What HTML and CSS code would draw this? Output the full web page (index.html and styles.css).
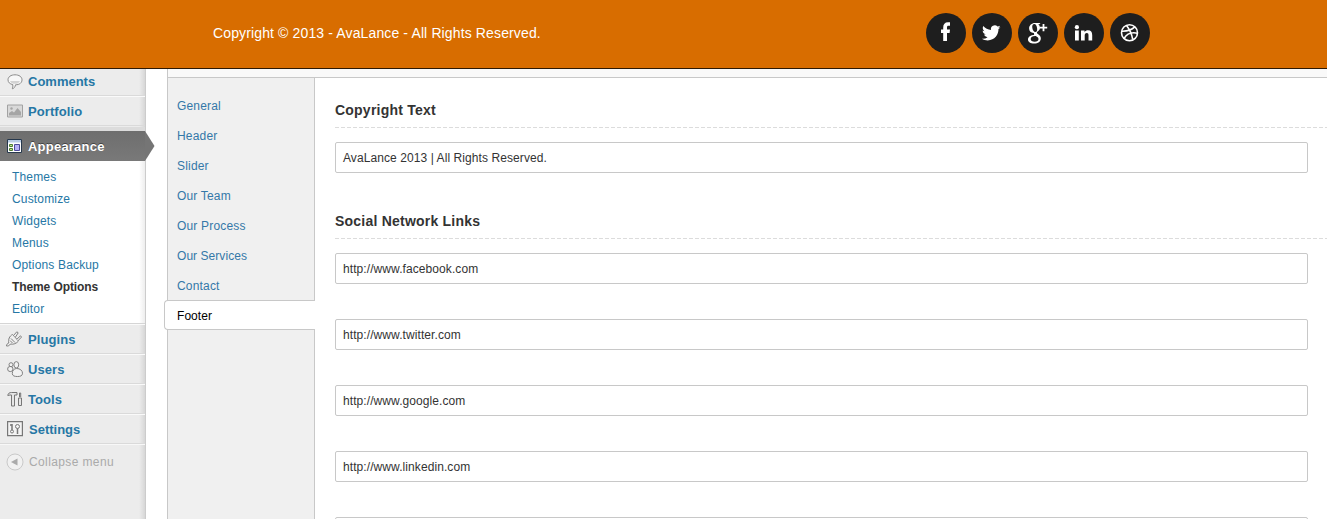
FILE: index.html
```html
<!DOCTYPE html>
<html lang="en">
<head>
<meta charset="utf-8">
<title>Theme Options</title>
<link rel="stylesheet" href="styles.css">
</head>
<body>
<header class="banner">
  <p class="copyright">Copyright © 2013 - AvaLance - All Rights Reserved.</p>
  <div class="social">
    <a class="circle"><svg viewBox="0 0 40 40"><path fill="#fff" d="M17.200 28V20H15V16.500h2.200v-1.800c0-3.600 1.700-5.500 4.800-5.500h2v3.600h-1.400c-1.300 0-1.600.5-1.600 1.700v2H24l-.4 3.500H21V28z"/></svg></a>
    <a class="circle"><svg viewBox="0 0 40 40"><path fill="#fff" d="M28.500 14.800c-.7.3-1.300.5-2 .6.800-.5 1.300-1.200 1.500-2-.7.400-1.500.7-2.300.8a3.600 3.600 0 0 0-6.200 3.300c-3-.1-5.700-1.600-7.500-3.800-1 1.700-.5 3.800 1.100 4.900-.6 0-1.200-.2-1.700-.5 0 1.800 1.200 3.300 3 3.700-.5.100-1.100.2-1.700.1.500 1.400 1.800 2.400 3.400 2.500a7.300 7.300 0 0 1-5.400 1.500c1.600 1 3.500 1.600 5.600 1.600 6.700 0 10.500-5.600 10.300-10.900.8-.5 1.400-1.100 1.900-1.800z" transform="translate(-1.200 -1.200) scale(1.040)"/></svg></a>
    <a class="circle"><svg viewBox="0 0 40 40" fill="#fff"><path fill-rule="evenodd" d="M22.500 10l-1.200 1.200h-1.100c1.200.9 1.800 2 1.800 3.500 0 1.500-.8 2.600-2 3.500-.9.800-1.100 1-1.100 1.500s.5.900 1.300 1.500c1.900 1.300 2.600 2.400 2.600 4.300 0 3-2.700 5-6.700 5-3.700 0-6.100-1.500-6.100-4 0-2.600 2.500-4.300 6.500-4.400-.6-.7-.8-1.400-.4-2.200-3 .2-5-1.700-5-4.400 0-3.100 2.500-5.500 6-5.500zM16.300 11c-1.500.1-2.300 1.500-2 3.700.3 2.500 1.600 4.200 3.100 4.200 1.400-.1 2-1.500 1.700-3.700-.3-2.500-1.400-4.300-2.800-4.200zM17.200 23c-2.700 0-4.500 1.200-4.500 3 0 1.700 1.500 2.700 4 2.700 2.400 0 3.800-1 3.800-2.700 0-1.300-1.200-2.100-2.700-3z"/><path d="M24.600 11h1.800v2.700h2.800v1.700h-2.800v2.800h-1.800v-2.800h-2.700v-1.700h2.700z"/></svg></a>
    <a class="circle"><svg viewBox="0 0 40 40" fill="#fff"><circle cx="12.900" cy="14.200" r="2.100"/><path d="M11 18h3.800v10H11zM17 18h3.500v1.500c1-1.300 2-1.800 3.500-1.800 3 0 4.200 1.900 4.200 4.800V28h-3.700v-5.100c0-1.500-.4-2.300-1.700-2.300-1.500 0-2.100 1-2.100 2.400v5H17z" transform="translate(0 -.5)"/></svg></a>
    <a class="circle"><svg viewBox="0 0 40 40" fill="none" stroke="#fff" stroke-width="1.600"><circle cx="19.500" cy="19.700" r="8"/><path d="M16.500 12.400c3 3.700 5.300 8.300 6.200 14M11.600 18.200c5.300.2 9.800-1 13.200-4.300M14 25.700c2.500-4.500 7.200-6.800 13.400-5.500"/></svg></a>
  </div>
</header>
<div class="layout">
  <aside class="menu">
    <a class="item comments"><svg class="icon" viewBox="0 0 16 16" fill="#f8f8f8" stroke="#8b8b8b"><path d="M8 .8c4 0 7 2 7 5 0 3-2.500 5-6.500 5-.2 2-1.500 3.700-3.200 4 .6-1 .7-2.500.5-4.200C2.800 10 1 8.300 1 5.800c0-3 3-5 7-5z"/><path stroke="none" fill="#d3d3d3" d="M3 7h10c-.8 2-3 2.800-5 2.800S3.600 9 3 7z"/></svg><span>Comments</span></a>
    <a class="item portfolio"><svg class="icon" viewBox="0 0 16 16"><path fill="#d9d9d9" stroke="#a2a2a2" d="M.5 2h15v12H.5z"/><path fill="#a5a5a5" d="M2 12.500V10l3-2 2 1.500L10.500 5 14 9v3.500z"/><circle cx="4.500" cy="5.500" r="1.200" fill="#a5a5a5"/></svg><span>Portfolio</span></a>
    <a class="item current"><svg class="icon" viewBox="0 0 16 16"><path fill="#fff" stroke="#26384d" d="M.5 1.500h14v13H.5z"/><path fill="#b8cce4" d="M1 2h13v2.500H1z"/><path fill="#b9e08c" stroke="#4d7c32" d="M2.500 6.500h3v2h-3zM2.500 10.500h3v2h-3z"/><path fill="#b5b0f5" stroke="#4c4a9a" d="M7.500 6.500h5v6h-5z"/></svg><span>Appearance</span><svg class="arrow" viewBox="0 0 10 30"><path fill="#757575" d="M0 0l9.500 15L0 30z"/></svg></a>
    <div class="submenu">
      <a>Themes</a><a>Customize</a><a>Widgets</a><a>Menus</a><a>Options Backup</a><a class="selected">Theme Options</a><a>Editor</a>
    </div>
    <a class="item plugins"><svg class="icon" viewBox="0 0 16 16" fill="#f0f0f0" stroke="#808080"><path d="M.5 15c0-1.500.8-2.500 2.300-3C2 8.500 3.500 5 6.500 3.500l6 6.500c-2 2.500-5 3.700-8 3C3.500 14.500 2.300 15.200.5 15z"/><path d="M7.500 4.500L10.800.8l1.400 1L9.500 6M10.800 8.300l3.700-3.500 1 1.300-3.500 3.700M5 7.500l4 4M4 9.500l2.500 2.500"/></svg><span>Plugins</span></a>
    <a class="item users"><svg class="icon" viewBox="0 0 16 16" fill="#f2f2f2" stroke="#808080"><ellipse cx="3.300" cy="8" rx="2.700" ry="2.600"/><circle cx="4" cy="3.700" r="2"/><ellipse cx="9.300" cy="3.800" rx="2.400" ry="3.200"/><path d="M5.300 12.500C5.300 9.500 7 7.500 9.700 7.500c3.300 0 5.800 2 5.800 4.700s-2.200 3.300-5 3.300-5.200-.5-5.200-3z"/></svg><span>Users</span></a>
    <a class="item tools"><svg class="icon" viewBox="0 0 16 16" fill="#e6e6e6" stroke="#777"><path d="M.8 4.500C1 2.300 2.500 1.500 4.500 1.500H10v2.500H7.500v11h-3V4H3zM12.500 6V2h1.200v4M11.500 7h3v7.500h-3z"/></svg><span>Tools</span></a>
    <a class="item settings"><svg class="icon" viewBox="0 0 16 16" fill="none" stroke="#777"><path fill="#f3f3f3" stroke-width="1.200" d="M.6.600h14.800v14H.6z"/><path stroke-width="1.500" d="M5 3v6M10.500 7.500V13M3 4h2"/><circle cx="5" cy="10.500" r="1.500"/><circle cx="10.500" cy="5.500" r="2"/></svg><span>Settings</span></a>
    <a class="collapse"><svg class="round" viewBox="0 0 18 18"><circle cx="9" cy="9" r="8" fill="#f1f1f1" stroke="#c9c9c9"/><path fill="#aaa" d="M5 9l6.500-3.600v7.200z"/></svg><span>Collapse menu</span></a>
  </aside>
  <main class="panel">
    <div class="strip"></div>
    <div class="columns">
      <nav class="tabs">
        <a>General</a><a>Header</a><a>Slider</a><a>Our Team</a><a>Our Process</a><a class="tight">Our Services</a><a>Contact</a><a class="active">Footer</a>
      </nav>
      <section class="content">
        <h2>Copyright Text</h2>
        <div class="field">AvaLance 2013 | All Rights Reserved.</div>
        <h2 class="h-social">Social Network Links</h2>
        <div class="field">http://www.facebook.com</div>
        <div class="field">http://www.twitter.com</div>
        <div class="field">http://www.google.com</div>
        <div class="field">http://www.linkedin.com</div>
        <div class="field"></div>
      </section>
    </div>
  </main>
</div>
</body>
</html>
```
FILE: styles.css
```css
* { box-sizing: border-box; }
body { margin: 0; height: 519px; overflow: hidden; background: #fff; font: 12px/22px "Liberation Sans", Arial, sans-serif; color: #333; }
.banner { height: 69px; display: flex; justify-content: space-between; padding: 13px 177px 0 213px; background: #d86d00; border-bottom: 1px solid #2e1a04; }
.copyright { margin: 0; font-size: 14px; line-height: 40px; color: #fff; letter-spacing: .13px; }
.social { display: flex; gap: 6px; }
.circle { width: 40px; height: 40px; border-radius: 50%; background: #1e1e1e; }
.circle svg { display: block; width: 40px; height: 40px; }

.layout { display: flex; height: 450px; overflow: hidden; }
.menu { width: 146px; flex: none; background: linear-gradient(to right, transparent 139px, rgba(0,0,0,.09) 145px), #ececec; border-right: 1px solid #ccc; color: #2677a5; }
.item { display: flex; align-items: center; height: 30px; padding-left: 7px; gap: 5px; border-top: 1px solid #fafafa; border-bottom: 1px solid #dadada; font-size: 13px; font-weight: bold; letter-spacing: .08px; }
.item span { padding-top: 1px; }
.icon { width: 16px; height: 16px; flex: none; }
.comments { height: 27px; border-top: 0; padding-bottom: 1px; letter-spacing: 0; }
.comments span { padding-top: 0; }
.portfolio { margin-bottom: 5px; }
.plugins .icon { margin-left: -1px; margin-right: 1px; }
.settings { gap: 6px; letter-spacing: 0; }
.current { position: relative; height: 30px; border: 0; background: linear-gradient(#6e6e6e, #797979); box-shadow: 0 -4px 0 #dcdcdc; color: #fff; letter-spacing: .22px; text-shadow: 0 -1px 0 #444; }
.arrow { position: absolute; left: 145px; top: 0; width: 10px; height: 30px; }
.submenu { display: flex; flex-direction: column; height: 163px; padding: 5px 0 0 12px; background: linear-gradient(to right, transparent 139px, rgba(0,0,0,.07) 145px), #fff; border-bottom: 1px solid #d5d5d5; letter-spacing: .16px; }
.selected { color: #333; font-weight: bold; letter-spacing: -.1px; }
.collapse { display: flex; align-items: center; gap: 5px; height: 35px; padding-left: 6px; color: #aaa; border-top: 1px solid #f8f8f8; letter-spacing: .38px; }
.round { width: 18px; height: 18px; }

.panel { flex: 1; min-width: 0; margin-left: 21px; border-left: 1px solid #c8c8c8; }
.strip { height: 9px; background: #f9f9f9; border-bottom: 1px solid #c8c8c8; }
.columns { display: flex; height: 441px; }
.tabs { display: flex; flex-direction: column; flex: none; width: 147px; padding-top: 12px; background: #f0f0f0; border-right: 1px solid #c8c8c8; color: #3478a8; letter-spacing: .18px; }
.tabs a { height: 30px; padding-left: 9px; line-height: 32px; }
.tabs .tight { letter-spacing: .05px; }
.tabs .active { margin: 0 -1px 0 -4px; padding-left: 12px; line-height: 30px; background: #fff; border: 1px solid #c8c8c8; border-right: 0; border-radius: 4px 0 0 4px; color: #000; letter-spacing: .05px; }
.content { flex: 1; min-width: 0; padding: 17px 0 0 20px; }
.content h2 { height: 33px; margin: 0 0 14px; font-size: 14px; line-height: 31px; letter-spacing: .22px; background: repeating-linear-gradient(to right, #dcdcdc 0 4px, transparent 4px 6px) 0 100% / 100% 1px no-repeat; }
.content .h-social { margin-top: -2px; }
.field { height: 31px; width: 973px; margin-bottom: 35px; padding-left: 7px; line-height: 30px; border: 1px solid #c8c8c8; border-radius: 2px; letter-spacing: .08px; }
```
